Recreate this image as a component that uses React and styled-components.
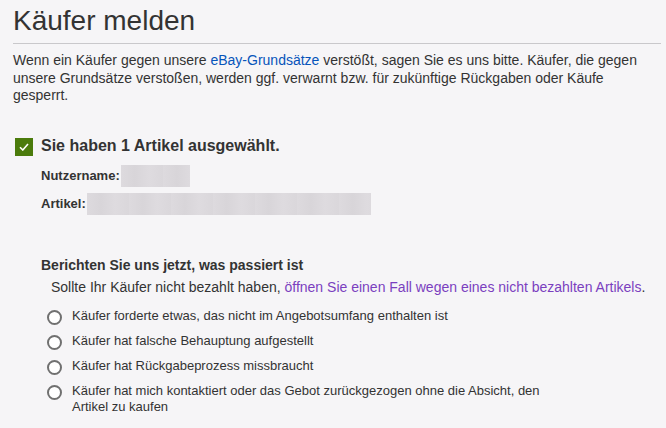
import styled, { createGlobalStyle } from "styled-components";

const GlobalStyle = createGlobalStyle`
  body {
    margin: 0;
    background: #f6f5f7;
    font-family: "Liberation Sans", Arial, sans-serif;
    color: #333;
  }
`;

const options = [
  "Käufer forderte etwas, das nicht im Angebotsumfang enthalten ist",
  "Käufer hat falsche Behauptung aufgestellt",
  "Käufer hat Rückgabeprozess missbraucht",
  "Käufer hat mich kontaktiert oder das Gebot zurückgezogen ohne die Absicht, den Artikel zu kaufen",
];

function App() {
  return (
    <Page>
      <GlobalStyle />
      <Title>Käufer melden</Title>
      <Intro>
        Wenn ein Käufer gegen unsere <a href="#">eBay-Grundsätze</a> verstößt,
        sagen Sie es uns bitte. Käufer, die gegen unsere Grundsätze verstoßen,
        werden ggf. verwarnt bzw. für zukünftige Rückgaben oder Käufe gesperrt.
      </Intro>

      <Selected>
        <CheckBox>
          <svg width="10" height="8" viewBox="0 0 10 8">
            <path
              d="M1 4.2 L3.8 7 L9 1"
              fill="none"
              stroke="#fff"
              strokeWidth="1.6"
            />
          </svg>
        </CheckBox>
        <h2>Sie haben 1 Artikel ausgewählt.</h2>
      </Selected>

      <Details>
        <DetailRow>
          <span className="label">Nutzername:</span>
          <Blur $width={69} />
        </DetailRow>
        <DetailRow>
          <span className="label">Artikel:</span>
          <Blur $width={284} />
        </DetailRow>
      </Details>

      <Report>
        <h3>Berichten Sie uns jetzt, was passiert ist</h3>
        <p className="hint">
          Sollte Ihr Käufer nicht bezahlt haben,{" "}
          <a href="#">
            öffnen Sie einen Fall wegen eines nicht bezahlten Artikels
          </a>
          .
        </p>
        <RadioList>
          {options.map((text) => (
            <RadioRow key={text}>
              <Radio />
              <span>{text}</span>
            </RadioRow>
          ))}
        </RadioList>
      </Report>
    </Page>
  );
}

const Page = styled.div`
  padding: 4px 5px 0 13px;
`;

const Title = styled.h1`
  margin: 0;
  font-size: 28px;
  line-height: 34px;
  font-weight: normal;
  color: #333;
  padding-bottom: 5px;
  border-bottom: 1px solid #c9c8cb;
`;

const Intro = styled.p`
  margin: 8px 0 0;
  font-size: 14px;
  line-height: 17.5px;
  padding-right: 10px;

  a {
    color: #0654ba;
    text-decoration: none;
  }
`;

const Selected = styled.div`
  margin-top: 33px;
  display: flex;
  align-items: center;
  gap: 8px;
  padding-left: 2px;

  h2 {
    margin: -2px 0 0;
    font-size: 16px;
    line-height: 18px;
    font-weight: bold;
    color: #333;
  }
`;

const CheckBox = styled.span`
  width: 18px;
  height: 18px;
  background: #4b7b0c;
  display: flex;
  align-items: center;
  justify-content: center;
`;

const Details = styled.div`
  margin-top: 9px;
  padding-left: 28px;
  display: flex;
  flex-direction: column;
  gap: 6px;
`;

const DetailRow = styled.div`
  display: flex;
  align-items: center;
  height: 22px;

  .label {
    font-size: 13px;
    font-weight: bold;
    color: #333;
  }
`;

const Blur = styled.span`
  width: ${(p) => p.$width}px;
  height: 22px;
  margin-left: 1px;
  background: repeating-linear-gradient(
    90deg,
    #dddade 0px,
    #d8d5d9 14px,
    #dedbdf 28px,
    #dad7db 42px
  );
`;

const Report = styled.div`
  margin-top: 42px;
  padding-left: 28px;

  h3 {
    margin: 0;
    font-size: 14px;
    line-height: 17.5px;
    font-weight: bold;
  }

  .hint {
    margin: 5px 0 0;
    padding-left: 10px;
    font-size: 14px;
    line-height: 17.5px;

    a {
      color: #7b3fbf;
      text-decoration: none;
    }
  }
`;

const RadioList = styled.div`
  margin-top: 11px;
  padding-left: 6px;
  display: flex;
  flex-direction: column;
  gap: 8px;
`;

const RadioRow = styled.label`
  display: flex;
  align-items: flex-start;
  gap: 10px;
  font-size: 13px;
  line-height: 16.5px;
  color: #333;

  span:last-child {
    max-width: 480px;
  }
`;

const Radio = styled.span`
  flex: none;
  width: 11px;
  height: 11px;
  margin-top: 2px;
  border: 2px solid #707070;
  border-radius: 50%;
  background: #fff;
`;

export default App;
